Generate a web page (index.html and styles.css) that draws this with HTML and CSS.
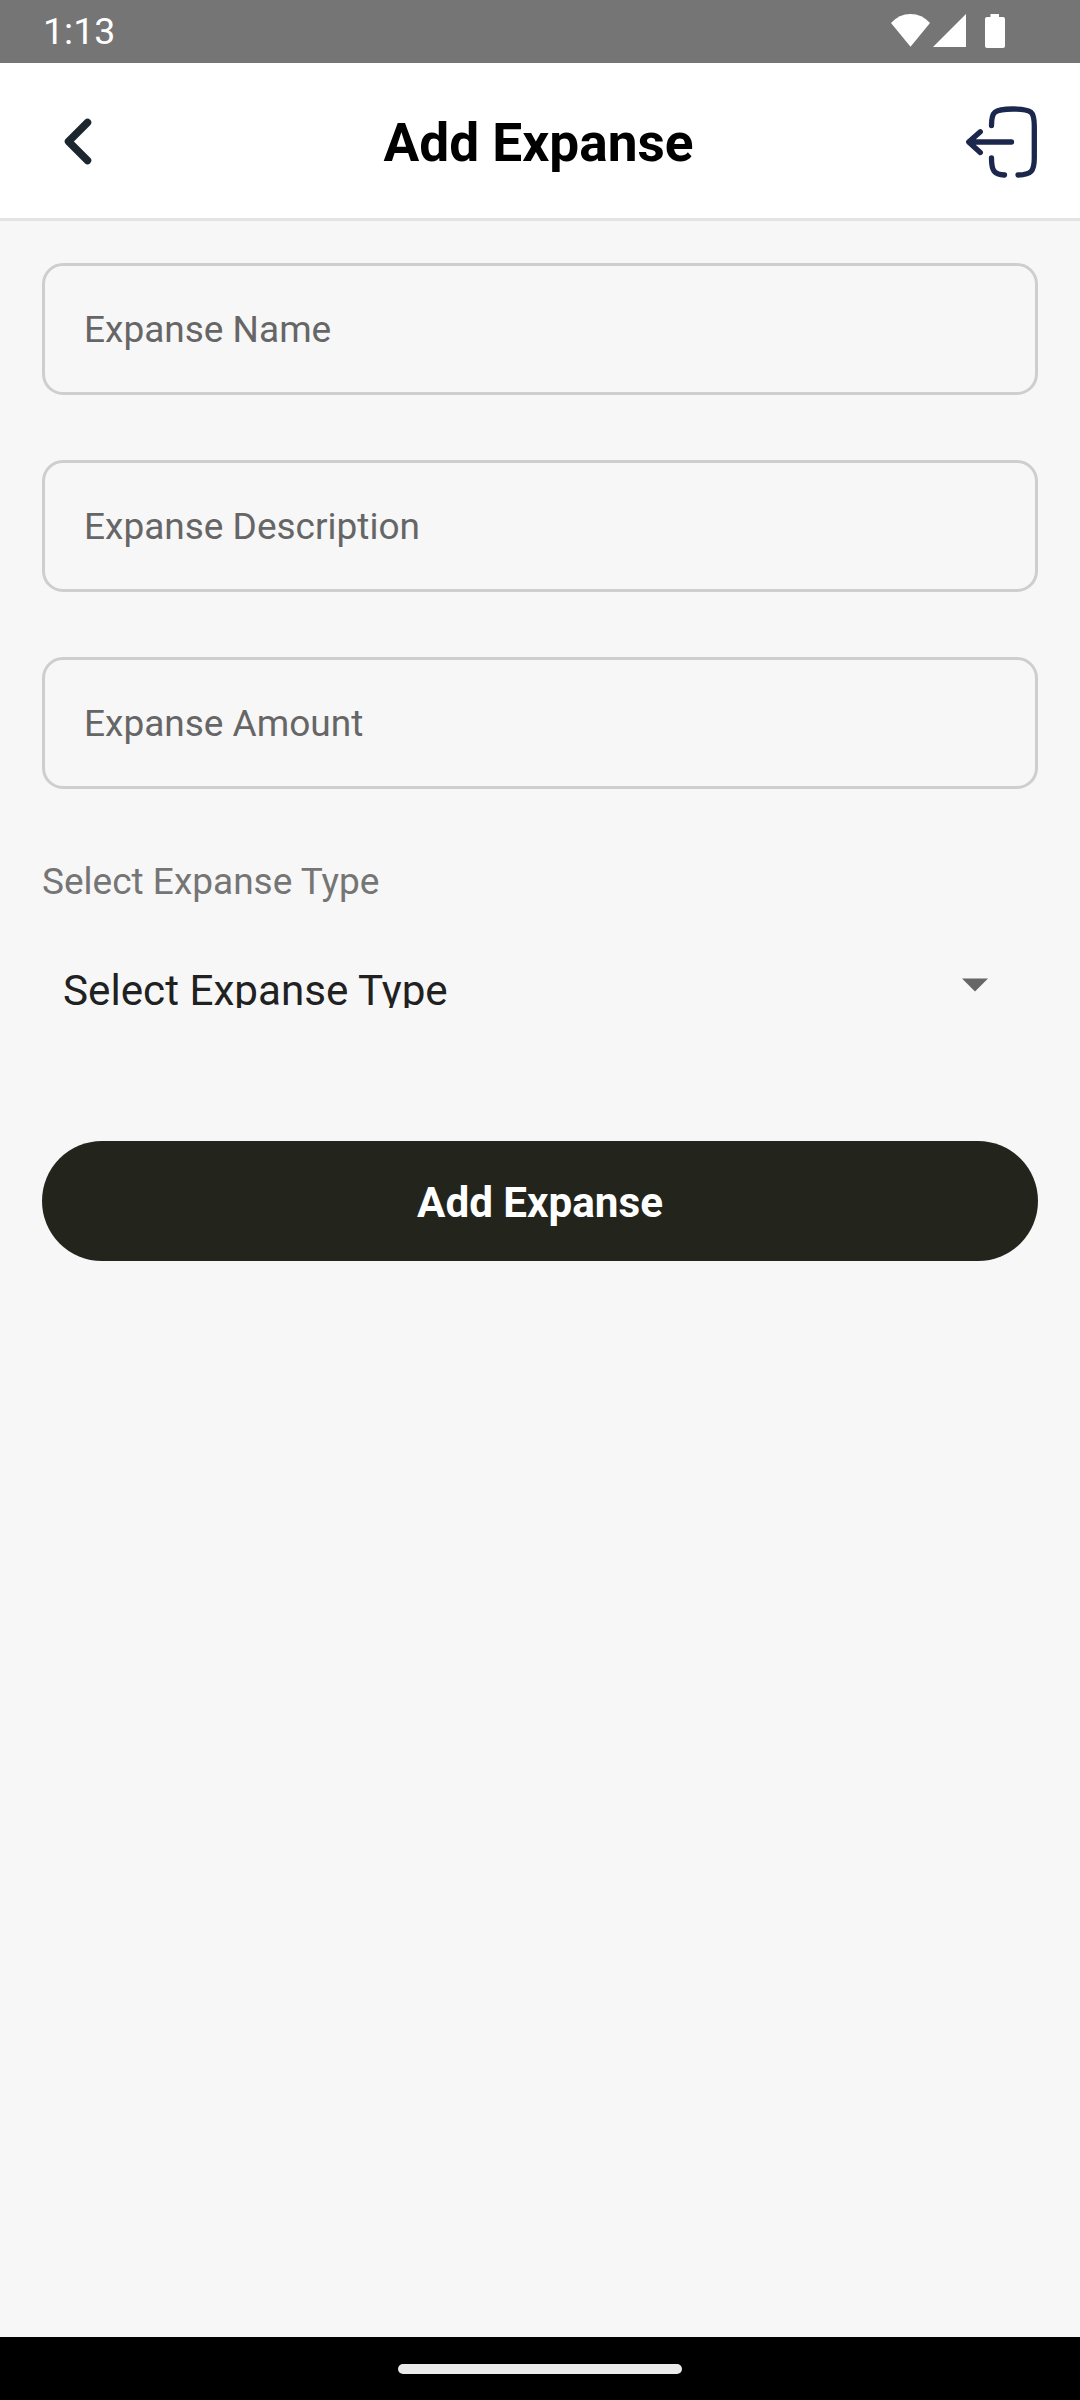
FILE: index.html
```html
<!DOCTYPE html>
<html lang="en">
<head>
<meta charset="utf-8">
<title>Add Expanse</title>
<link rel="stylesheet" href="styles.css">
</head>
<body>
<div class="screen">
  <div class="status-bar">
    <span class="clock">1:13</span>
    <svg class="status-icons" width="116" height="36" viewBox="0 0 116 36">
      <path d="M0 9Q8 0 19.500 0T39 9L19.500 32.700Z"/>
      <path d="M42 33L75 0V33Z"/>
      <path d="M99.500 0h8.500v3h4q2 0 2 2v27q0 2-2 2h-16q-2 0-2-2V5q0-2 2-2h3.500z"/>
    </svg>
  </div>
  <header class="app-bar">
    <svg class="icon back" viewBox="0 0 72 72"><path d="M45.500 16.500L26.500 35.500L45.500 54.500"/></svg>
    <h1 class="title">Add Expanse</h1>
    <svg class="icon logout" viewBox="0 0 72 72">
      <path d="M25.500 19.500C25.500 6 27.500 3 47 3S68.300 6 68.300 20V52C68.300 65 65.500 68.500 52 69"/>
      <path d="M25.500 52C25.500 65 28 68.300 38.500 69"/>
      <path d="M45.500 36H3M14.300 25.700L2.700 36L14.300 46.500"/>
    </svg>
  </header>
  <main class="form">
    <div class="field">Expanse Name</div>
    <div class="field">Expanse Description</div>
    <div class="field">Expanse Amount</div>
    <div class="label">Select Expanse Type</div>
    <div class="select">
      <span class="select-value">Select Expanse Type</span>
      <svg class="caret" width="26" height="14" viewBox="0 0 26 14"><path d="M0 0.500H26L13 13.500Z"/></svg>
    </div>
    <button class="submit" type="button">Add Expanse</button>
  </main>
  <div class="nav-bar"><div class="handle"></div></div>
</div>
</body>
</html>
```
FILE: styles.css
```css
* { box-sizing: border-box; }
body { margin: 0; font-family: Roboto, "Liberation Sans", sans-serif; }
.screen {
  width: 1080px;
  height: 2400px;
  display: flex;
  flex-direction: column;
  background: #f7f7f7;
}
.status-bar {
  height: 63px;
  padding: 0 73px 0 43px;
  display: flex;
  justify-content: space-between;
  background: #757575;
}
.clock { color: #fff; font-size: 37.5px; line-height: 63px; }
.status-icons { margin-top: 14px; fill: #fff; }
.app-bar {
  height: 158px;
  padding: 2px 42px 0;
  display: grid;
  grid-template-columns: 72px 1fr 72px;
  align-items: center;
  background: #fff;
  border-bottom: 3px solid #e4e4e4;
}
.icon { width: 72px; height: 72px; fill: none; stroke-linecap: round; stroke-linejoin: round; }
.back { stroke: #1a272e; stroke-width: 7.500; }
.logout { stroke: #1b274c; stroke-width: 5.300; }
.title {
  margin: 0;
  padding: 2px 3px 0 0;
  text-align: center;
  font-size: 53.2px;
  font-weight: 700;
  line-height: 62px;
  color: #000;
}
.form { flex: 1; padding: 42px 42px 0; display: flex; flex-direction: column; }
.field {
  height: 132px;
  margin-bottom: 65px;
  padding: 0 39px;
  border: 3px solid #cecece;
  border-radius: 21px;
  font-size: 37px;
  line-height: 128px;
  color: #666;
}
.label { margin-top: 6px; height: 44px; font-size: 37px; line-height: 44px; color: #757575; }
.select {
  height: 42px;
  margin-top: 62px;
  padding: 0 50px 0 21px;
  display: flex;
  justify-content: space-between;
  overflow: hidden;
}
.select-value { font-size: 42.2px; line-height: 49px; color: #212121; }
.caret { margin-top: 12px; fill: #666; }
.submit {
  height: 120px;
  margin-top: 133px;
  padding: 3px 0 0;
  border: 0;
  border-radius: 60px;
  background: #23251d;
  color: #fff;
  font: 700 42.2px/49px Roboto, "Liberation Sans", sans-serif;
}
.nav-bar { height: 63px; padding-top: 27px; background: #000; }
.handle { width: 284px; height: 10px; margin: 0 auto; border-radius: 5px; background: #ebebeb; }
```
